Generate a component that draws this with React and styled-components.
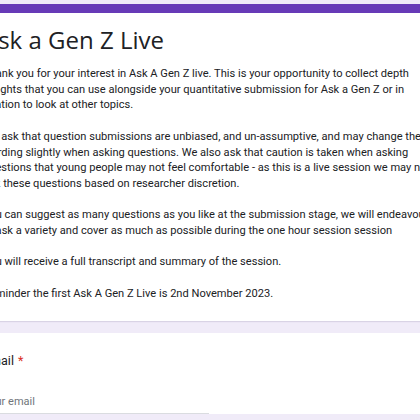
import styled, { createGlobalStyle } from 'styled-components';

const Global = createGlobalStyle`
  html, body {
    margin: 0;
    padding: 0;
    background: #f0ebf8;
    overflow: hidden;
  }
`;

const Page = styled.div`
  display: flex;
  flex-direction: column;
  gap: 12px;
  padding-top: 4px;
  margin-left: -17px;
  width: 470px;
  font-family: Roboto, "Liberation Sans", sans-serif;
  color: #202124;
`;

const Card = styled.section`
  background: #fff;
  border-top: ${(p) => (p.$accent ? '9px solid #673ab7' : 'none')};
  padding: ${(p) => (p.$accent ? '11px 0 20px 0' : '19px 0 0 0')};
  box-shadow: 0 1px 1px rgba(60, 40, 100, 0.12);
`;

const Title = styled.h1`
  margin: 0 0 10px;
  font-family: "Open Sans", Roboto, sans-serif;
  font-weight: 400;
  font-size: 24px;
  line-height: 32px;
  color: #202124;
`;

const Para = styled.p`
  margin: 0 0 15.7px;
  font-size: 11.1px;
  line-height: 15.7px;
  color: #202124;
  white-space: nowrap;
  &:last-child {
    margin-bottom: 0;
  }
`;

const Label = styled.div`
  font-size: 12.5px;
  line-height: 18px;
  color: #202124;
  margin-bottom: 20px;
`;

const Required = styled.span`
  color: #d93025;
  margin-left: 4px;
`;

const Input = styled.input`
  display: block;
  width: 226px;
  height: 22px;
  padding: 0 0 1px;
  border: none;
  border-bottom: 1px solid #dadce0;
  font-family: Roboto, "Liberation Sans", sans-serif;
  font-size: 11px;
  color: #202124;
  background: transparent;
  outline: none;
  &::placeholder {
    color: #70757a;
  }
`;

const paragraphs = [
  [
    'Thank you for your interest in Ask A Gen Z live. This is your opportunity to collect depth',
    'insights that you can use alongside your quantitative submission for Ask a Gen Z or in',
    'relation to look at other topics.',
  ],
  [
    'We ask that question submissions are unbiased, and un-assumptive, and may change the',
    'wording slightly when asking questions. We also ask that caution is taken when asking',
    'questions that young people may not feel comfortable - as this is a live session we may not',
    'ask these questions based on researcher discretion.',
  ],
  [
    'You can suggest as many questions as you like at the submission stage, we will endeavour',
    'to ask a variety and cover as much as possible during the one hour session session',
  ],
  ['You will receive a full transcript and summary of the session.'],
  ['Reminder the first Ask A Gen Z Live is 2nd November 2023.'],
];

export default function App() {
  return (
    <>
      <Global />
      <Page>
        <Card $accent>
          <Title>Ask a Gen Z Live</Title>
          {paragraphs.map((lines, i) => (
            <Para key={i}>
              {lines.map((line, j) => (
                <span key={j}>
                  {line}
                  {j < lines.length - 1 && <br />}
                </span>
              ))}
            </Para>
          ))}
        </Card>
        <Card>
          <Label>
            Email<Required>*</Required>
          </Label>
          <Input type="email" placeholder="Your email" />
        </Card>
      </Page>
    </>
  );
}
